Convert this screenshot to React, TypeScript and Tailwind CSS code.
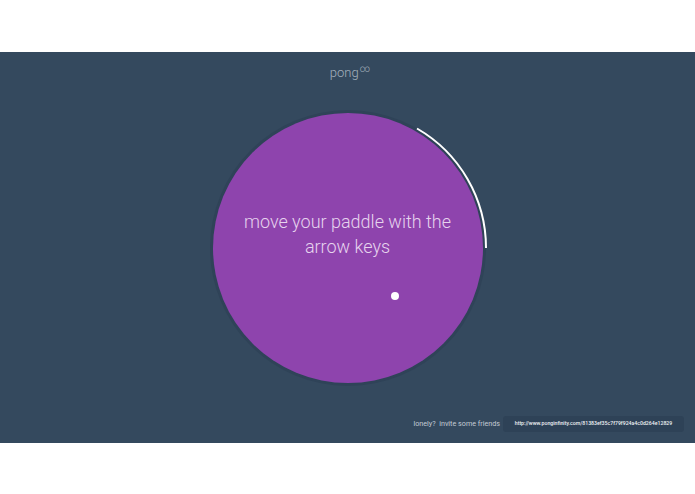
import React from 'react';

const shareUrl = 'http://www.ponginfinity.com/81383ef35c7f79f924a4c0d264e12829';

export default function App() {
  return (
    <div className="w-[695px] h-[494px] bg-white font-['Roboto',sans-serif]">
      <div className="h-[52px]" />
      <div className="relative h-[391px] bg-[#34495e] flex flex-col items-center">
        <div className="mt-[11px] ml-[5px] text-[13px] font-light text-[#a5b1bd] leading-[20px]">
          pong<sup className="text-[10px] -top-[5px] ml-[1px]">∞</sup>
        </div>

        <div className="relative mt-[27px] w-[276px] h-[276px] rounded-full bg-[#2f4358] flex items-center justify-center">
          <div className="relative w-[270px] h-[270px] rounded-full bg-[#8e44ad] flex items-center justify-center">
            <p className="-mt-[28px] w-[250px] text-center text-[18px] font-light leading-[25px] text-[#e6d3ee]">
              move your paddle with the arrow keys
            </p>
            <span className="absolute left-[178px] top-[179px] w-[8px] h-[8px] rounded-full bg-white" />
          </div>
          <svg className="absolute -left-[2px] -top-[2px]" width="280" height="280" viewBox="0 0 280 280" fill="none">
            <path d="M 209 20.5 A 138 138 0 0 1 278 140" stroke="#ffffff" strokeWidth="2" />
          </svg>
        </div>

        <div className="mt-auto mb-[11px] self-end mr-[11px] flex items-center gap-[3px]">
          <span className="text-[7.2px] text-[#c3ccd5]">lonely?&nbsp; invite some friends</span>
          <div className="w-[181px] h-[16px] rounded-[3px] bg-[#2e4257] flex items-center justify-center">
            <span className="text-[5.2px] font-medium text-[#eef2f5]">{shareUrl}</span>
          </div>
        </div>
      </div>
    </div>
  );
}
